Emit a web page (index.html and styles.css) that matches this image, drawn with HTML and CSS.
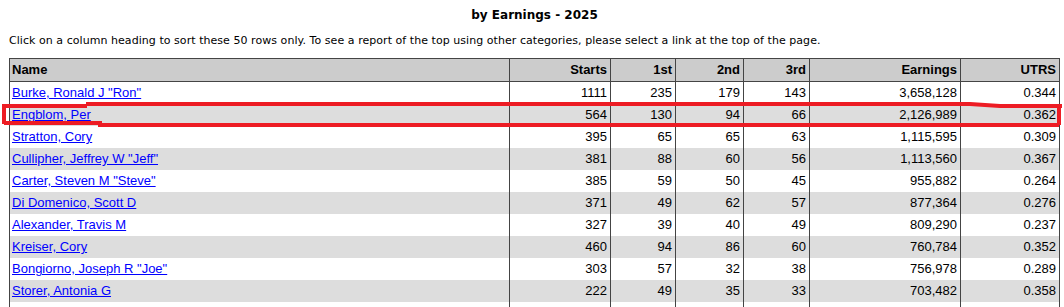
FILE: index.html
```html
<!DOCTYPE html>
<html lang="en">
<head>
  <meta charset="UTF-8" />
  <title>by Earnings - 2025</title>
  <link rel="stylesheet" href="styles.css">
</head>
<body>
  <div class="page">
    <h3 class="title">by Earnings - 2025</h3>
    <p class="note">Click on a column heading to sort these 50 rows only. To see a report of the top using other categories, please select a link at the top of the page.</p>

    <table class="report">
      <colgroup>
        <col class="c-name">
        <col class="c-starts">
        <col class="c-first">
        <col class="c-second">
        <col class="c-third">
        <col class="c-earn">
        <col class="c-utrs">
      </colgroup>
      <thead>
        <tr>
          <th class="left">Name</th>
          <th>Starts</th>
          <th>1st</th>
          <th>2nd</th>
          <th>3rd</th>
          <th>Earnings</th>
          <th>UTRS</th>
        </tr>
      </thead>
      <tbody>
        <tr><td class="left"><a href="#">Burke, Ronald J "Ron"</a></td><td>1111</td><td>235</td><td>179</td><td>143</td><td>3,658,128</td><td>0.344</td></tr>
        <tr><td class="left"><a href="#">Engblom, Per</a></td><td>564</td><td>130</td><td>94</td><td>66</td><td>2,126,989</td><td>0.362</td></tr>
        <tr><td class="left"><a href="#">Stratton, Cory</a></td><td>395</td><td>65</td><td>65</td><td>63</td><td>1,115,595</td><td>0.309</td></tr>
        <tr><td class="left"><a href="#">Cullipher, Jeffrey W "Jeff"</a></td><td>381</td><td>88</td><td>60</td><td>56</td><td>1,113,560</td><td>0.367</td></tr>
        <tr><td class="left"><a href="#">Carter, Steven M "Steve"</a></td><td>385</td><td>59</td><td>50</td><td>45</td><td>955,882</td><td>0.264</td></tr>
        <tr><td class="left"><a href="#">Di Domenico, Scott D</a></td><td>371</td><td>49</td><td>62</td><td>57</td><td>877,364</td><td>0.276</td></tr>
        <tr><td class="left"><a href="#">Alexander, Travis M</a></td><td>327</td><td>39</td><td>40</td><td>49</td><td>809,290</td><td>0.237</td></tr>
        <tr><td class="left"><a href="#">Kreiser, Cory</a></td><td>460</td><td>94</td><td>86</td><td>60</td><td>760,784</td><td>0.352</td></tr>
        <tr><td class="left"><a href="#">Bongiorno, Joseph R "Joe"</a></td><td>303</td><td>57</td><td>32</td><td>38</td><td>756,978</td><td>0.289</td></tr>
        <tr><td class="left"><a href="#">Storer, Antonia G</a></td><td>222</td><td>49</td><td>35</td><td>33</td><td>703,482</td><td>0.358</td></tr>
        <tr><td class="left"><a href="#">&nbsp;</a></td><td></td><td></td><td></td><td></td><td></td><td></td></tr>
      </tbody>
    </table>
  </div>

  <!-- red marker drawn over the second row -->
  <svg class="marker" width="1064" height="307" viewBox="0 0 1064 307">
    <path d="M4 124 L4 106 L87 106 M86 104 L970 104 L1000 106 L1062 106 M1059 105 L1059 125 M4 123 L100 123 L100 125 L1059 125" />
  </svg>
</body>
</html>
```

FILE: styles.css
```css
body {
  margin: 0;
  background: #fff;
  color: #000;
  font-family: "DejaVu Sans", Verdana, sans-serif;
}

.page {
  padding: 0 4px 0 9px;
}

.title {
  margin: 7px 0 0;
  font-size: 12px;
  line-height: 16px;
  font-weight: bold;
  text-align: center;
}

.note {
  margin: 11px 0 0;
  font-size: 11px;
  line-height: 14px;
  letter-spacing: 0.05px;
}

/* the sortable report table */
.report {
  width: 100%;
  margin-top: 10px;
  table-layout: fixed;
  border-collapse: collapse;
  border: 1px solid #444;
  font-family: "Liberation Sans", Arial, sans-serif;
  font-size: 13px;
}

.c-name { width: 500px; }
.c-starts { width: 101px; }
.c-first { width: 65px; }
.c-second { width: 68px; }
.c-third { width: 66px; }
.c-earn { width: 151px; }
.c-utrs { width: 99px; }

.report th,
.report td {
  height: 22px;
  padding: 0 3px 0 2px;
  line-height: 22px;
  text-align: right;
  white-space: nowrap;
  border-left: 1px solid #444;
  border-right: 1px solid #444;
}

.report th {
  background: #ccc;
  font-weight: bold;
  border-bottom: 1px solid #444;
}

.report .left {
  text-align: left;
}

.report tbody tr:nth-child(even) {
  background: #ddd;
}

.report a {
  color: #00f;
  text-decoration: underline;
}

.marker {
  position: absolute;
  top: 0;
  left: 0;
  pointer-events: none;
}

.marker path {
  fill: none;
  stroke: #ed1c24;
  stroke-width: 4;
}
```
